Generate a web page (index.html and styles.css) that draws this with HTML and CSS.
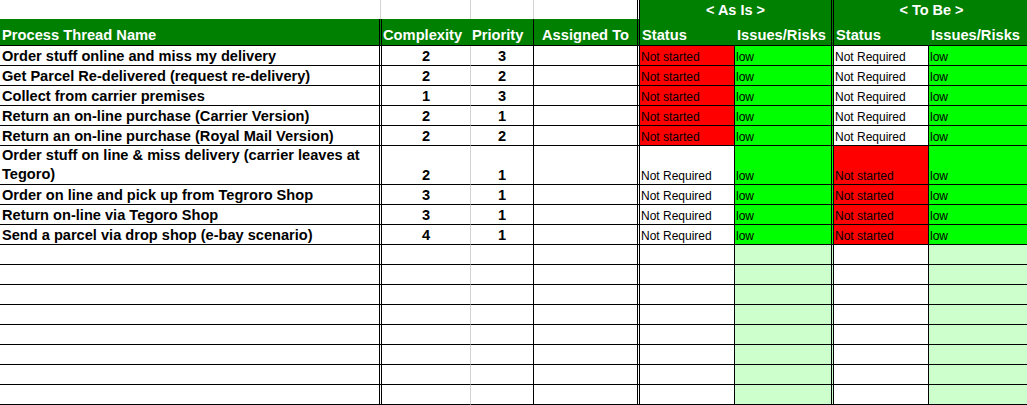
FILE: index.html
```html
<!DOCTYPE html>
<html>
<head>
<meta charset="utf-8">
<link rel="stylesheet" href="styles.css">
</head>
<body>
<div class="sheet">
  <!-- top header row -->
  <div class="c top a-top"></div>
  <div class="c top cx-top"></div>
  <div class="c top pr-top"></div>
  <div class="c top as-top"></div>
  <div class="c title dbl">&lt; As Is &gt;</div>
  <div class="c title tb">&lt; To Be &gt;</div>

  <!-- header row 2 -->
  <div class="c hd a">Process Thread Name</div>
  <div class="c hd cx-h">Complexity</div>
  <div class="c hd pr-h">Priority</div>
  <div class="c hd as center">Assigned To</div>
  <div class="c hd st-h">Status</div>
  <div class="c hd dbl">Issues/Risks</div>
  <div class="c hd st-h2">Status</div>
  <div class="c hd is2">Issues/Risks</div>

  <!-- data rows -->
  <div class="c d a">Order stuff online and miss my delivery</div>
  <div class="c d num cx">2</div>
  <div class="c d num pr">3</div>
  <div class="c d as"></div>
  <div class="c s st red">Not started</div>
  <div class="c s dbl grn">low</div>
  <div class="c s st">Not Required</div>
  <div class="c s is2 grn">low</div>

  <div class="c d a">Get Parcel Re-delivered (request re-delivery)</div>
  <div class="c d num cx">2</div>
  <div class="c d num pr">2</div>
  <div class="c d as"></div>
  <div class="c s st red">Not started</div>
  <div class="c s dbl grn">low</div>
  <div class="c s st">Not Required</div>
  <div class="c s is2 grn">low</div>

  <div class="c d a">Collect from carrier premises</div>
  <div class="c d num cx">1</div>
  <div class="c d num pr">3</div>
  <div class="c d as"></div>
  <div class="c s st red">Not started</div>
  <div class="c s dbl grn">low</div>
  <div class="c s st">Not Required</div>
  <div class="c s is2 grn">low</div>

  <div class="c d a">Return an on-line purchase (Carrier Version)</div>
  <div class="c d num cx">2</div>
  <div class="c d num pr">1</div>
  <div class="c d as"></div>
  <div class="c s st red">Not started</div>
  <div class="c s dbl grn">low</div>
  <div class="c s st">Not Required</div>
  <div class="c s is2 grn">low</div>

  <div class="c d a">Return an on-line purchase (Royal Mail Version)</div>
  <div class="c d num cx">2</div>
  <div class="c d num pr">2</div>
  <div class="c d as"></div>
  <div class="c s st red">Not started</div>
  <div class="c s dbl grn">low</div>
  <div class="c s st">Not Required</div>
  <div class="c s is2 grn">low</div>

  <div class="c d a wrap">Order stuff on line &amp; miss delivery (carrier leaves at Tegoro)</div>
  <div class="c d num cx">2</div>
  <div class="c d num pr">1</div>
  <div class="c d as"></div>
  <div class="c s st">Not Required</div>
  <div class="c s dbl grn">low</div>
  <div class="c s st red">Not started</div>
  <div class="c s is2 grn">low</div>

  <div class="c d a">Order on line and pick up from Tegroro Shop</div>
  <div class="c d num cx">3</div>
  <div class="c d num pr">1</div>
  <div class="c d as"></div>
  <div class="c s st">Not Required</div>
  <div class="c s dbl grn">low</div>
  <div class="c s st red">Not started</div>
  <div class="c s is2 grn">low</div>

  <div class="c d a">Return on-line via Tegoro Shop</div>
  <div class="c d num cx">3</div>
  <div class="c d num pr">1</div>
  <div class="c d as"></div>
  <div class="c s st">Not Required</div>
  <div class="c s dbl grn">low</div>
  <div class="c s st red">Not started</div>
  <div class="c s is2 grn">low</div>

  <div class="c d a">Send a parcel via drop shop (e-bay scenario)</div>
  <div class="c d num cx">4</div>
  <div class="c d num pr">1</div>
  <div class="c d as"></div>
  <div class="c s st">Not Required</div>
  <div class="c s dbl grn">low</div>
  <div class="c s st red">Not started</div>
  <div class="c s is2 grn">low</div>

  <!-- blank rows -->
  <div class="c a"></div><div class="c cx"></div><div class="c pr"></div><div class="c as"></div><div class="c st"></div><div class="c dbl lgrn"></div><div class="c st"></div><div class="c is2 lgrn"></div>
  <div class="c a"></div><div class="c cx"></div><div class="c pr"></div><div class="c as"></div><div class="c st"></div><div class="c dbl lgrn"></div><div class="c st"></div><div class="c is2 lgrn"></div>
  <div class="c a"></div><div class="c cx"></div><div class="c pr"></div><div class="c as"></div><div class="c st"></div><div class="c dbl lgrn"></div><div class="c st"></div><div class="c is2 lgrn"></div>
  <div class="c a"></div><div class="c cx"></div><div class="c pr"></div><div class="c as"></div><div class="c st"></div><div class="c dbl lgrn"></div><div class="c st"></div><div class="c is2 lgrn"></div>
  <div class="c a"></div><div class="c cx"></div><div class="c pr"></div><div class="c as"></div><div class="c st"></div><div class="c dbl lgrn"></div><div class="c st"></div><div class="c is2 lgrn"></div>
  <div class="c a"></div><div class="c cx"></div><div class="c pr"></div><div class="c as"></div><div class="c st"></div><div class="c dbl lgrn"></div><div class="c st"></div><div class="c is2 lgrn"></div>
  <div class="c a"></div><div class="c cx"></div><div class="c pr"></div><div class="c as"></div><div class="c st"></div><div class="c dbl lgrn"></div><div class="c st"></div><div class="c is2 lgrn"></div>
  <div class="c a"></div><div class="c cx"></div><div class="c pr"></div><div class="c as"></div><div class="c st"></div><div class="c dbl lgrn"></div><div class="c st"></div><div class="c is2 lgrn"></div>
</div>
</body>
</html>
```

FILE: styles.css
```css
* { box-sizing: border-box; }
html, body { margin: 0; padding: 0; background: #fff; }
body { font-family: "Liberation Sans", Arial, sans-serif; overflow: hidden; }

.sheet {
  display: grid;
  grid-template-columns: 382px 89px 63px 106px 95px 99px 95px 98px;
  grid-template-rows: 19px 27px repeat(5, 20px) 39px repeat(3, 20px) repeat(8, 20px);
  width: 1027px;
  height: 405px;
}

.c {
  display: flex;
  align-items: flex-end;
  min-width: 0;
  overflow: hidden;
  white-space: nowrap;
  color: #000;
}

/* top row */
.top { background: #fff; }
.a-top { border-right: 1px solid #d4d4d4; margin-right: 1px; }
.cx-top { border-right: 1px solid #d4d4d4; }
.pr-top { border-right: 1px solid #d4d4d4; }
.as-top { border-right: 3px double #000; }
.title {
  grid-column: span 2;
  background: #008000;
  color: #fff;
  font-weight: bold;
  font-size: 14.5px;
  justify-content: center;
  align-items: center;
  line-height: 18px;
  padding-top: 1px;
}
.tb { padding-left: 2px; }

/* header row 2 */
.hd {
  background: #008000;
  color: #fff;
  font-weight: bold;
  font-size: 14.7px;
  line-height: 18px;
  padding: 0 0 1px 2px;
  border-bottom: 1px solid #000;
}
.cx-h { padding-left: 1px; }
.pr-h { padding-left: 1px; border-right: 1px solid #000; }
.st-h { padding-left: 2px; }
.st-h2 { padding-left: 2px; }
.center { justify-content: center; padding-left: 0; }

/* column borders */
.a { border-right: 3px double #000; border-bottom: 1px solid #000; }
.cx { border-right: 1px solid #d4d4d4; border-bottom: 1px solid #000; }
.pr { border-right: 1px solid #000; border-bottom: 1px solid #000; }
.as { border-right: 3px double #000; border-bottom: 1px solid #000; }
.st { border-right: 1px solid #000; border-bottom: 1px solid #000; }
.dbl { border-right: 3px double #000; }
.s.dbl, .lgrn.dbl, .c.dbl:not(.title) { border-bottom: 1px solid #000; }
.is2 { border-bottom: 1px solid #000; }

/* text */
.d {
  font-weight: bold;
  font-size: 14.6px;
  line-height: 18px;
  padding: 0 0 0 2px;
}
.wrap { white-space: normal; line-height: 19px; }
.num { justify-content: center; padding-left: 0; }
.s {
  font-size: 12px;
  line-height: 16px;
  padding: 0 0 0 1px;
}

/* fills */
.red { background: #ff0000; }
.grn { background: #00ff00; }
.lgrn { background: #ccffcc; }
```
